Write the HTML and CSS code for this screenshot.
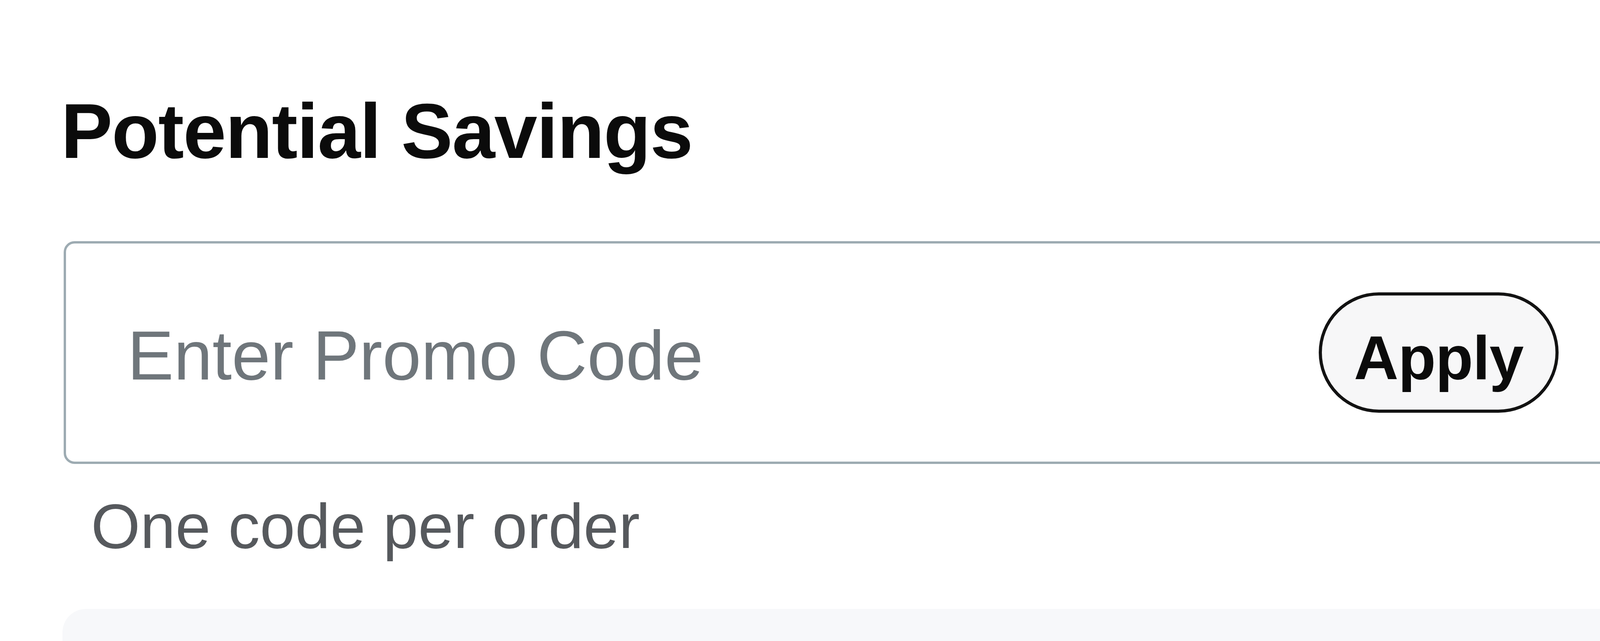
FILE: index.html
```html
<!DOCTYPE html>
<html lang="en">

<head>
  <meta charset="UTF-8">
  <meta name="viewport" content="width=device-width, initial-scale=1.0">
  <title>Potential Savings</title>
  <link rel="stylesheet" href="styles.css">
</head>

<body>

  <!-- Promo code section -->
  <section class="savings">
    <h2 class="savings-title">Potential Savings</h2>

    <form class="promo-box" onsubmit="return false;">
      <input type="text" class="promo-input" placeholder="Enter Promo Code">
      <button type="submit" class="apply-btn">Apply</button>
    </form>

    <p class="promo-hint">One code per order</p>

    <!-- Summary card (continues below the fold) -->
    <div class="summary-card"></div>
  </section>

</body>

</html>
```

FILE: styles.css
```css
/* Global Styling */
html,
body {
  margin: 0;
  padding: 0;
  overflow: hidden;
  background-color: #ffffff;
}

body {
  font-family: "Liberation Sans", Arial, sans-serif;
  color: #111111;
}

/* Section Layout */
.savings {
  width: 4005px;
  padding-left: 160px;
  display: flex;
  flex-direction: column;
}

.savings-title {
  margin: 237px 0 0 -4px;
  font-size: 198px;
  line-height: 1;
  font-weight: bold;
  letter-spacing: -2px;
  color: #0b0b0b;
}

/* Promo input box */
.promo-box {
  margin: 182px 0 0 3px;
  height: 570px;
  box-sizing: border-box;
  border: 6px solid #9dabb2; /* muted blue-gray */
  border-radius: 28px;
  display: flex;
  align-items: center;
  padding: 0 169px 0 157px;
}

.promo-input {
  flex: 1;
  border: none;
  outline: none;
  background: transparent;
  font-family: "Liberation Sans", Arial, sans-serif;
  font-size: 178px;
  padding: 14px 0 0 0;
  color: #111111;
}

.promo-input::placeholder {
  color: #6f767b;
}

.apply-btn {
  flex: none;
  font-family: "Liberation Sans", Arial, sans-serif;
  font-size: 158px;
  font-weight: bold;
  line-height: 1;
  letter-spacing: -1px;
  color: #0b0b0b;
  background-color: #f7f7f8;
  border: 8px solid #121212;
  border-radius: 999px;
  padding: 80px 82px 54px;
  cursor: pointer;
}

/* Hint text */
.promo-hint {
  margin: 78px 0 0 73px;
  font-size: 162px;
  line-height: 1;
  color: #56595d;
}

/* Summary card */
.summary-card {
  margin-top: 131px;
  height: 82px;
  background-color: #f7f8fa;
  border-radius: 60px 60px 0 0;
}
```
